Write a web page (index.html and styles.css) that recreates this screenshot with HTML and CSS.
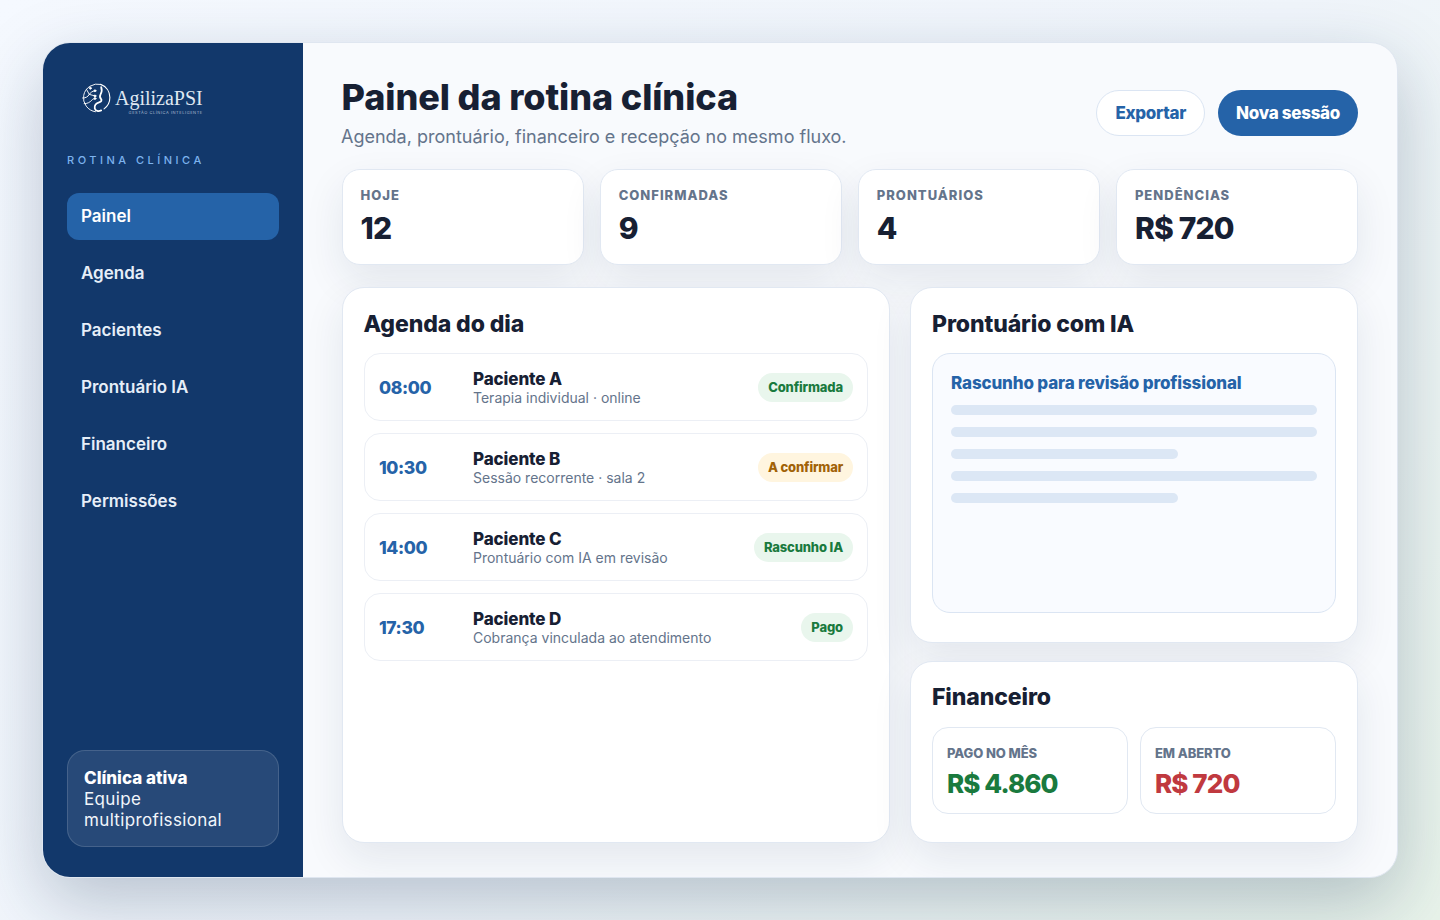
FILE: index.html
```html
<!DOCTYPE html>
<html lang="pt-BR">
<head>
<meta charset="utf-8">
<title>AgilizaPSI</title>
<link rel="stylesheet" href="styles.css">
</head>
<body>
<div class="shell">
  <aside class="sidebar">
    <div class="logo">
      <svg class="logo-mark" viewBox="0 0 30 30" width="31" height="31" fill="none" stroke="#fff" stroke-width=".9" stroke-linecap="round">
        <path d="M20 2.300A13.500 13.500 0 1 0 15 28.800"/>
        <path d="M20 2.300c5.500 2 8.900 7 8.900 12.700 0 4.500-2.200 8.500-5.600 11" stroke-width="1.100"/>
        <path d="M20.500 5c1 2.800.6 5-.6 7-1 1.800-.8 3 .4 4.300 1.200 1.500.2 3-1.800 3.400-3 .6-4.800 3-4.200 6 .8 2.500 3.500 3 6.200 1.800" stroke-width="1.700"/>
        <path d="M2.500 15.500c3 0 5-1 6.500-3.500 1-1.800 3-3 5-3.500M6.500 7.500l2.500 4.500M9 12l5.500 1.500M4 21c3 0 5.500-1.200 7.500-3.500 1-1 2-1.500 3-1.500"/>
        <circle cx="14.500" cy="8.500" r=".9" fill="#fff"/><circle cx="10" cy="6" r=".9" fill="#fff"/><circle cx="14.500" cy="13.500" r=".9" fill="#fff"/><circle cx="14.500" cy="16" r=".9" fill="#fff"/>
      </svg>
      <div class="logo-text">
        <span class="logo-name">AgilizaPSI</span>
        <span class="logo-sub">GESTÃO CLÍNICA INTELIGENTE</span>
      </div>
    </div>
    <div class="eyebrow">ROTINA CLÍNICA</div>
    <nav class="nav">
      <a class="nav-item active">Painel</a>
      <a class="nav-item">Agenda</a>
      <a class="nav-item">Pacientes</a>
      <a class="nav-item">Prontuário IA</a>
      <a class="nav-item">Financeiro</a>
      <a class="nav-item">Permissões</a>
    </nav>
    <div class="clinic">
      <strong>Clínica ativa</strong>
      <span>Equipe multiprofissional</span>
    </div>
  </aside>
  <main class="main">
    <header class="top">
      <div>
        <h1>Painel da rotina clínica</h1>
        <p class="subtitle">Agenda, prontuário, financeiro e recepção no mesmo fluxo.</p>
      </div>
      <div class="actions">
        <button class="btn btn-ghost">Exportar</button>
        <button class="btn btn-primary">Nova sessão</button>
      </div>
    </header>
    <section class="stats">
      <div class="stat"><span class="stat-label">HOJE</span><strong class="stat-value">12</strong></div>
      <div class="stat"><span class="stat-label">CONFIRMADAS</span><strong class="stat-value">9</strong></div>
      <div class="stat"><span class="stat-label">PRONTUÁRIOS</span><strong class="stat-value">4</strong></div>
      <div class="stat"><span class="stat-label">PENDÊNCIAS</span><strong class="stat-value">R$ 720</strong></div>
    </section>
    <section class="grid">
      <div class="card agenda">
        <h2>Agenda do dia</h2>
        <div class="rows">
          <div class="row"><span class="time">08:00</span><div class="who"><strong>Paciente A</strong><span>Terapia individual · online</span></div><span class="pill pill-green">Confirmada</span></div>
          <div class="row"><span class="time">10:30</span><div class="who"><strong>Paciente B</strong><span>Sessão recorrente · sala 2</span></div><span class="pill pill-amber">A confirmar</span></div>
          <div class="row"><span class="time">14:00</span><div class="who"><strong>Paciente C</strong><span>Prontuário com IA em revisão</span></div><span class="pill pill-green">Rascunho IA</span></div>
          <div class="row"><span class="time">17:30</span><div class="who"><strong>Paciente D</strong><span>Cobrança vinculada ao atendimento</span></div><span class="pill pill-green">Pago</span></div>
        </div>
      </div>
      <div class="side">
        <div class="card record">
          <h2>Prontuário com IA</h2>
          <div class="draft">
            <strong>Rascunho para revisão profissional</strong>
            <div class="lines">
              <i class="line"></i><i class="line"></i><i class="line short"></i><i class="line"></i><i class="line short"></i>
            </div>
          </div>
        </div>
        <div class="card finance">
          <h2>Financeiro</h2>
          <div class="money">
            <div class="money-box"><span>PAGO NO MÊS</span><strong class="paid">R$ 4.860</strong></div>
            <div class="money-box"><span>EM ABERTO</span><strong class="open">R$ 720</strong></div>
          </div>
        </div>
      </div>
    </section>
  </main>
</div>
</body>
</html>
```
FILE: styles.css
```css
* { box-sizing: border-box; }
html, body { height: 100%; }
body {
  margin: 0;
  padding: 42px;
  font-family: "Inter", "Noto Sans", sans-serif;
  color: #172033;
  background: linear-gradient(135deg, #f5f9ff 0%, #f0f5fb 55%, #e8f3ea 100%);
  overflow: hidden;
}
.shell {
  display: flex;
  height: 836px;
  border: 1px solid #dfe6f0;
  border-radius: 28px;
  overflow: hidden;
  background: #f8fafd;
  box-shadow: 0 24px 70px rgba(20, 45, 80, .26);
}
.sidebar {
  flex: 0 0 260px;
  display: flex;
  flex-direction: column;
  padding: 32px 24px 30px;
  background: #12386b;
  color: #fff;
}
.logo { display: flex; align-items: center; gap: 4px; height: 44px; padding-left: 13px; }
.logo-mark { flex: none; }
.logo-text { display: flex; flex-direction: column; align-items: flex-end; padding-top: 9px; }
.logo-name {
  font-family: "Liberation Serif", serif;
  font-size: 20px;
  line-height: 21px;
  color: #dfe7f1;
  font-weight: 400;
}
.logo-sub { margin-top: 2px; font-size: 4px; line-height: 4px; letter-spacing: .55px; color: #a9b9cf; white-space: nowrap; }
.eyebrow {
  margin-top: 34px;
  font-size: 11px;
  line-height: 14px;
  font-weight: 500;
  letter-spacing: 3.500px;
  color: #7db3ee;
}
.nav { display: flex; flex-direction: column; gap: 10px; margin-top: 26px; }
.nav-item {
  display: block;
  height: 47px;
  padding: 0 14px;
  border-radius: 12px;
  font-size: 17px;
  line-height: 47px;
  font-weight: 600;
  color: #e6eef8;
}
.nav-item.active { background: #2563a8; color: #fff; }
.clinic {
  margin-top: auto;
  padding: 17px 16px 15px;
  border: 1px solid rgba(255, 255, 255, .14);
  border-radius: 18px;
  background: rgba(255, 255, 255, .09);
  font-size: 17px;
  line-height: 21px;
  color: #f2f6fb;
}
.clinic strong { display: block; font-weight: 800; color: #fff; }
.clinic span { display: block; letter-spacing: .35px; }
.main {
  flex: 1;
  min-width: 0;
  display: flex;
  flex-direction: column;
  padding: 32px 39px 34px 38.500px;
}
.top { display: flex; justify-content: space-between; align-items: flex-start; height: 78px; margin-bottom: 16px; }
h1 { margin: 0; font-size: 36px; line-height: 44px; font-weight: 800; letter-spacing: -.1px; color: #172033; }
.subtitle { margin: 6px 0 0 -.5px; font-size: 18px; line-height: 24px; color: #64748b; }
.actions { display: flex; gap: 13px; margin-top: 15px; }
.btn {
  height: 46px;
  border-radius: 23px;
  font: 800 17px "Inter", sans-serif;
  letter-spacing: -.3px;
}
.btn-ghost { padding: 0 18px; border: 1px solid #dbe5f3; background: #fff; color: #2563a8; }
.btn-primary { padding: 0 18px; border: 0; background: #2563a8; color: #fff; }
.stats { display: grid; grid-template-columns: repeat(4, 1fr); gap: 16px; }
.stat, .card {
  border: 1px solid #e1e8f2;
  background: #fff;
  box-shadow: 0 16px 40px rgba(18, 40, 80, .09);
}
.stat {
  height: 96px;
  padding: 17px 18px;
  border-radius: 18px;
  display: flex;
  flex-direction: column;
}
.stat-label { font-size: 13px; line-height: 16px; font-weight: 800; letter-spacing: 1px; color: #64748b; }
.stat-value { margin-top: 7px; font-size: 30px; line-height: 36px; font-weight: 800; letter-spacing: -.8px; color: #172033; }
.grid { flex: 1; min-height: 0; display: grid; grid-template-columns: 548.500px 448px; gap: 20px; margin-top: 22px; }
.card { border-radius: 22px; padding: 22px 21px 21px; }
h2 { margin: 0; font-size: 23px; line-height: 28px; font-weight: 800; letter-spacing: -.1px; color: #172033; }
.rows { display: flex; flex-direction: column; gap: 12px; margin-top: 15px; }
.row {
  display: flex;
  align-items: center;
  height: 68px;
  padding: 0 14px 0 14.500px;
  border: 1px solid #eceff5;
  border-radius: 16px;
}
.time { flex: 0 0 94px; font-size: 17.500px; font-weight: 800; letter-spacing: -.4px; color: #2563a8; }
.who { flex: 1; display: flex; flex-direction: column; }
.who strong { font-size: 17px; line-height: 20px; font-weight: 800; letter-spacing: -.1px; color: #172033; }
.who span { font-size: 14px; line-height: 17px; color: #64748b; }
.pill { height: 29px; padding: 0 10px; border-radius: 15px; font-size: 13px; line-height: 29px; font-weight: 800; letter-spacing: -.15px; }
.pill-green { background: #e9f6ed; color: #1a7a3e; }
.pill-amber { background: #fff5df; color: #a16207; }
.side { display: flex; flex-direction: column; gap: 18px; min-height: 0; }
.record { flex: 1; display: flex; flex-direction: column; padding-bottom: 29px; }
.draft {
  flex: 1;
  margin-top: 15px;
  padding: 18px 18px 17px;
  border: 1px solid #dbe5f3;
  border-radius: 18px;
  background: #f9fbff;
}
.draft strong { display: block; font-size: 17px; line-height: 22px; font-weight: 800; letter-spacing: -.15px; color: #2563a8; }
.lines { display: flex; flex-direction: column; gap: 12px; margin-top: 11px; }
.line { display: block; height: 10px; border-radius: 5px; background: #dce7f5; }
.line.short { width: 62%; }
.finance { flex: 0 0 182px; padding-top: 21px; }
.money { display: grid; grid-template-columns: 1fr 1fr; gap: 12px; margin-top: 16px; }
.money-box { height: 87px; padding: 16px 14px; border: 1px solid #e1e8f2; border-radius: 16px; display: flex; flex-direction: column; }
.money-box span { font-size: 13px; line-height: 18px; font-weight: 800; letter-spacing: -.1px; color: #64748b; }
.money-box strong { margin-top: 6px; font-size: 26px; line-height: 32px; font-weight: 800; letter-spacing: -.9px; }
.paid { color: #1a7a3e; }
.open { color: #c0393f; }
```
